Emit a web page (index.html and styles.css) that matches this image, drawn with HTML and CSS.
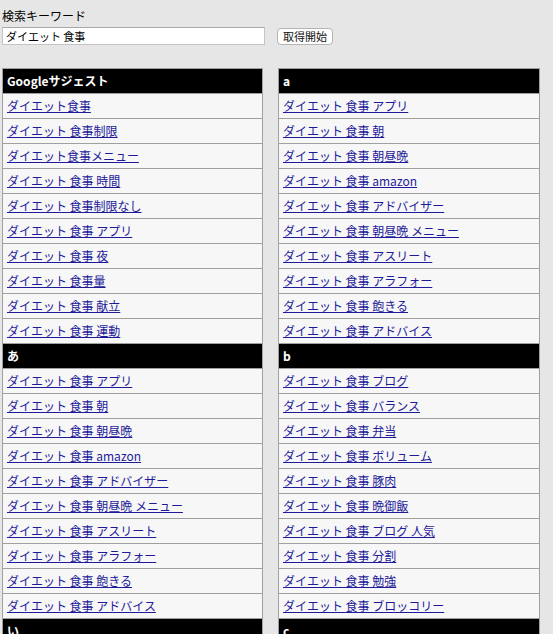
FILE: index.html
```html
<!DOCTYPE html>
<html lang="ja">
<head>
<meta charset="utf-8">
<title>サジェスト</title>
<link rel="stylesheet" href="styles.css">
</head>
<body>
<div class="search">
  <div class="label">検索キーワード</div>
  <div class="form-row">
    <input class="keyword" type="text" value="ダイエット 食事">
    <button class="start" type="button">取得開始</button>
  </div>
</div>
<div class="columns">
  <div class="col">
    <div class="head">Googleサジェスト</div>
    <div class="row"><a href="#">ダイエット食事</a></div>
    <div class="row"><a href="#">ダイエット 食事制限</a></div>
    <div class="row"><a href="#">ダイエット食事メニュー</a></div>
    <div class="row"><a href="#">ダイエット 食事 時間</a></div>
    <div class="row"><a href="#">ダイエット 食事制限なし</a></div>
    <div class="row"><a href="#">ダイエット 食事 アプリ</a></div>
    <div class="row"><a href="#">ダイエット 食事 夜</a></div>
    <div class="row"><a href="#">ダイエット 食事量</a></div>
    <div class="row"><a href="#">ダイエット 食事 献立</a></div>
    <div class="row"><a href="#">ダイエット 食事 運動</a></div>
    <div class="head">あ</div>
    <div class="row"><a href="#">ダイエット 食事 アプリ</a></div>
    <div class="row"><a href="#">ダイエット 食事 朝</a></div>
    <div class="row"><a href="#">ダイエット 食事 朝昼晩</a></div>
    <div class="row"><a href="#">ダイエット 食事 amazon</a></div>
    <div class="row"><a href="#">ダイエット 食事 アドバイザー</a></div>
    <div class="row"><a href="#">ダイエット 食事 朝昼晩 メニュー</a></div>
    <div class="row"><a href="#">ダイエット 食事 アスリート</a></div>
    <div class="row"><a href="#">ダイエット 食事 アラフォー</a></div>
    <div class="row"><a href="#">ダイエット 食事 飽きる</a></div>
    <div class="row"><a href="#">ダイエット 食事 アドバイス</a></div>
    <div class="head">い</div>
    <div class="row"><a href="#">ダイエット 食事 1日</a></div>
    <div class="row"><a href="#">ダイエット 食事 1週間</a></div>
  </div>
  <div class="col">
    <div class="head">a</div>
    <div class="row"><a href="#">ダイエット 食事 アプリ</a></div>
    <div class="row"><a href="#">ダイエット 食事 朝</a></div>
    <div class="row"><a href="#">ダイエット 食事 朝昼晩</a></div>
    <div class="row"><a href="#">ダイエット 食事 amazon</a></div>
    <div class="row"><a href="#">ダイエット 食事 アドバイザー</a></div>
    <div class="row"><a href="#">ダイエット 食事 朝昼晩 メニュー</a></div>
    <div class="row"><a href="#">ダイエット 食事 アスリート</a></div>
    <div class="row"><a href="#">ダイエット 食事 アラフォー</a></div>
    <div class="row"><a href="#">ダイエット 食事 飽きる</a></div>
    <div class="row"><a href="#">ダイエット 食事 アドバイス</a></div>
    <div class="head">b</div>
    <div class="row"><a href="#">ダイエット 食事 ブログ</a></div>
    <div class="row"><a href="#">ダイエット 食事 バランス</a></div>
    <div class="row"><a href="#">ダイエット 食事 弁当</a></div>
    <div class="row"><a href="#">ダイエット 食事 ボリューム</a></div>
    <div class="row"><a href="#">ダイエット 食事 豚肉</a></div>
    <div class="row"><a href="#">ダイエット 食事 晩御飯</a></div>
    <div class="row"><a href="#">ダイエット 食事 ブログ 人気</a></div>
    <div class="row"><a href="#">ダイエット 食事 分割</a></div>
    <div class="row"><a href="#">ダイエット 食事 勉強</a></div>
    <div class="row"><a href="#">ダイエット 食事 ブロッコリー</a></div>
    <div class="head">c</div>
    <div class="row"><a href="#">ダイエット 食事 カロリー</a></div>
    <div class="row"><a href="#">ダイエット 食事 コンビニ</a></div>
  </div>
</div>
</body>
</html>
```

FILE: styles.css
```css
html, body {
  margin: 0;
  padding: 0;
  background: #e6e6e6;
}
body {
  font-family: "Noto Sans CJK JP", "Liberation Sans", sans-serif;
  font-size: 12px;
  color: #000;
}
.search {
  padding: 8px 0 0 2px;
}
.label {
  font-size: 12px;
  line-height: 16px;
  height: 16px;
}
.form-row {
  display: flex;
  align-items: flex-start;
  margin-top: 3px;
}
.keyword {
  box-sizing: border-box;
  width: 263px;
  height: 18px;
  margin: 0;
  padding: 0 3px;
  border: 1px solid #c4c4c4;
  border-top-color: #a8a8a8;
  background: #fff;
  font-family: "Noto Sans CJK JP", sans-serif;
  font-size: 11px;
  color: #000;
  outline: none;
}
.start {
  box-sizing: border-box;
  margin: 1px 0 0 12px;
  width: 56px;
  height: 17px;
  padding: 0;
  border: 1px solid #b4b4b4;
  border-radius: 4px;
  background: #fff;
  font-family: "Noto Sans CJK JP", sans-serif;
  font-size: 11px;
  line-height: 15px;
  color: #111;
}
.columns {
  display: grid;
  grid-template-columns: 261px 262px;
  column-gap: 15px;
  align-items: start;
  padding-left: 2px;
  margin-top: 23px;
}
.col {
  border: 1px solid #a0a0a0;
  border-bottom: none;
}
.head {
  height: 24px;
  line-height: 24px;
  padding-left: 4px;
  background: #000;
  color: #fff;
  font-size: 12px;
  font-weight: bold;
  border-bottom: 1px solid #a0a0a0;
}
.row {
  height: 24px;
  line-height: 24px;
  padding-left: 4px;
  background: #f7f7f7;
  border-bottom: 1px solid #a0a0a0;
  white-space: nowrap;
}
.row a {
  color: #1e1a9a;
  text-decoration: underline;
}
```
